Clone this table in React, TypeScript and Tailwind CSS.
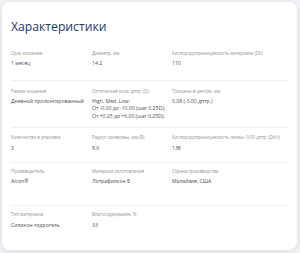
import React from 'react';

type Cell = { label: string; value: string[] };
type Row = { cells: Cell[]; h: string; pt: string; gap: string; last?: boolean };

const rows: Row[] = [
  {
    h: 'h-[39px]', pt: 'pt-[7.5px]', gap: 'mt-[3px]',
    cells: [
      { label: 'Срок ношения', value: ['1 месяц'] },
      { label: 'Диаметр, мм', value: ['14.2'] },
      { label: 'Кислородопроницаемость материала (Dk)', value: ['110'] },
    ],
  },
  {
    h: 'h-[47px]', pt: 'pt-[6.5px]', gap: 'mt-[3px]',
    cells: [
      { label: 'Режим ношения', value: ['Дневной пролонгированный'] },
      {
        label: 'Оптическая сила, дптр. (D)',
        value: ['High, Med, Low:', 'От -0.00 до -10.00 (шаг 0.25D);', 'От +0.25 до +6.00 (шаг 0.25D);'],
      },
      { label: 'Толщина в центре, мм', value: ['0.08 (-3.00 дптр.)'] },
    ],
  },
  {
    h: 'h-[35px]', pt: 'pt-[5.5px]', gap: 'mt-[4.5px]',
    cells: [
      { label: 'Количество в упаковке', value: ['3'] },
      { label: 'Радиус кривизны, мм (R)', value: ['8.6'] },
      { label: 'Кислородопроницаемость линзы -3.00 дптр. (Dk/t)', value: ['138'] },
    ],
  },
  {
    h: 'h-[43px]', pt: 'pt-[4.5px]', gap: 'mt-[3px]',
    cells: [
      { label: 'Производитель', value: ['Alcon®'] },
      { label: 'Материал изготовления', value: ['Лотрафилкон Б'] },
      { label: 'Страна производства', value: ['Малайзия, США'] },
    ],
  },
  {
    h: 'h-[40px]', pt: 'pt-[4.5px]', gap: 'mt-[4.5px]', last: true,
    cells: [
      { label: 'Тип материала', value: ['Силикон-гидрогель'] },
      { label: 'Влагосодержание, %', value: ['33'] },
    ],
  },
];

export default function App() {
  return (
    <div className="w-[300px] h-[253px] bg-[#eef0f3] pt-[2px] pl-[2px] pr-[3px] pb-[3px] font-['Open_Sans',sans-serif]">
      <div className="h-full bg-white rounded-[8px] shadow-[0_1px_4px_rgba(0,0,0,0.08)] px-[9px] pt-[16px]">
        <h1 className="text-[12.2px] leading-[18px] text-[#1d3a6b] font-normal">Характеристики</h1>

        <div className="mt-[6px]">
          {rows.map((row, i) => (
            <div
              key={i}
              className={`grid grid-cols-[81px_80px_1fr] ${row.h} ${row.pt} ${row.last ? '' : 'border-b border-[#eef0f3]'}`}
            >
              {row.cells.map((c) => (
                <div key={c.label}>
                  <div className="text-[4.4px] leading-[7px] text-[#8e939b] whitespace-nowrap">{c.label}</div>
                  <div className={`${row.gap} text-[5.1px] leading-[7.5px] text-[#474c54] whitespace-nowrap`}>
                    {c.value.map((v) => (
                      <div key={v}>{v}</div>
                    ))}
                  </div>
                </div>
              ))}
            </div>
          ))}
        </div>
      </div>
    </div>
  );
}
